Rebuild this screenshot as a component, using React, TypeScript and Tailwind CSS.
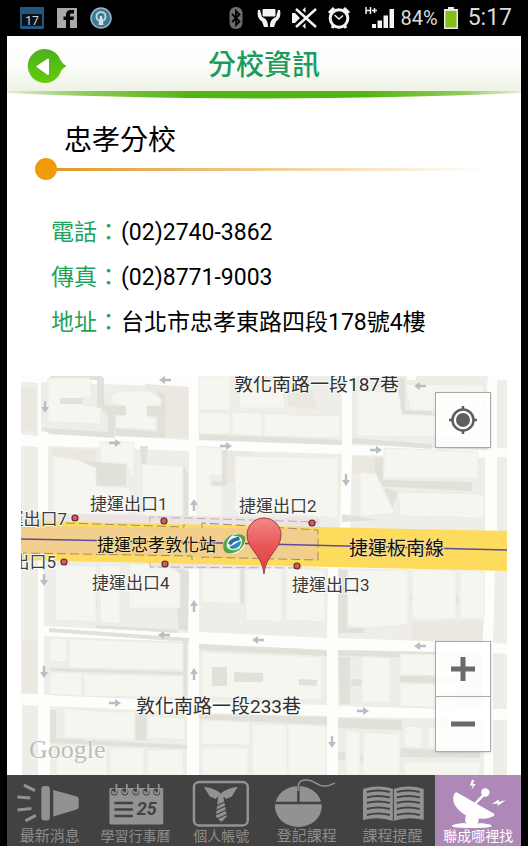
import React, { useState } from 'react';

type Tab = { id: string; label: string; size: string; icon: React.ReactNode };

const FONT = "font-[Roboto,'Noto_Sans_CJK_TC',sans-serif]";

const contacts = [
  { label: '電話', value: '(02)2740-3862' },
  { label: '傳真', value: '(02)8771-9003' },
  { label: '地址', value: '台北市忠孝東路四段178號4樓' },
];

const StatusBar: React.FC = () => (
  <div className="flex h-9 items-center justify-between pl-5 pr-4 text-[#dcdcdc]">
    <div className="flex items-center gap-[13px]">
      <svg width="24" height="22" viewBox="0 0 24 22">
        <rect width="24" height="22" rx="1" fill="#24577f" />
        <rect x="2" y="7" width="20" height="12" fill="#0d1116" />
        <text x="12" y="18" textAnchor="middle" fontSize="12" fill="#cfd4d8">17</text>
      </svg>
      <svg width="20" height="20" viewBox="0 0 20 20">
        <rect width="20" height="20" fill="#a9a9a9" />
        <path d="M9 20V12H6.500V8.500H9V7C9 4 10.500 2 14 2H17V5.500H15C13.500 5.500 13 6 13 7.200V8.500H17L16.500 12H13V20Z" fill="#050505" />
      </svg>
      <svg width="22" height="22" viewBox="0 0 22 22">
        <circle cx="11" cy="11" r="10" fill="#3c7a94" stroke="#9cbac5" strokeWidth="1.500" />
        <circle cx="11" cy="9.500" r="4.500" fill="none" stroke="#bcd3db" strokeWidth="2" />
        <path d="M10 9h2l1.500 9h-5z" fill="#d6e1e5" />
      </svg>
    </div>
    <div className="flex items-center gap-[10px]">
      <svg className="mr-1" width="14" height="22" viewBox="0 0 14 22">
        <rect x="0.500" width="13" height="22" rx="6" fill="#6d6d6d" />
        <path d="M3 7L10.500 14.500L7 18V4L10.500 7.500L3 15" fill="none" stroke="#000" strokeWidth="1.800" />
      </svg>
      <svg width="24" height="22" viewBox="0 0 24 22" fill="#f4f4f4">
        <rect x="5.500" y="2" width="13" height="7.500" rx="1" />
        <path d="M1 3C0 8 1 12 5 14.500L7 20H11C11 15 10 12 5 10L3 3Z" />
        <path d="M23 3C24 8 23 12 19 14.500L17 20H13C13 15 14 12 19 10L21 3Z" />
      </svg>
      <svg width="26" height="24" viewBox="0 0 26 24" fill="#f4f4f4">
        <path d="M1 7H4L9 12L4 17H1Z" />
        <path d="M5 3L25 21M25 3L5 21" stroke="#f4f4f4" strokeWidth="2.500" />
        <path d="M11.500 4L14.500 1V7ZM11.500 20L14.500 23V17Z" />
      </svg>
      <svg width="24" height="24" viewBox="0 0 24 24" fill="none" stroke="#f4f4f4">
        <circle cx="12" cy="12.500" r="8.800" strokeWidth="3" />
        <path d="M2 7L7 2M22 7L17 2M5 22L7 19M19 22L17 19" strokeWidth="3" />
        <path d="M7.500 9L12 13L16 9.500" strokeWidth="1.500" />
      </svg>
      <svg className="ml-1" width="30" height="24" viewBox="0 0 30 24" fill="#f4f4f4">
        <path d="M1 1V8M5.500 1V8M1 4.500H5.500M7 4.500H12M9.500 2V7" stroke="#f4f4f4" strokeWidth="1.500" />
        <path d="M7 18H11V22H7ZM12.500 14.500H17V22H12.500ZM18.500 9.500H23V22H18.500ZM24.500 3H29V22H24.500Z" />
      </svg>
      <span className="-ml-1 text-[20px]">84%</span>
      <svg className="-ml-1" width="14" height="22" viewBox="0 0 14 22">
        <path d="M4 0H10V2H14V22H0V2H4Z" fill="#e8e8e8" />
        <rect x="1.500" y="4" width="11" height="16.500" fill="#84bd17" />
      </svg>
      <span className="text-[23px]">5:17</span>
    </div>
  </div>
);

const Header: React.FC = () => (
  <header>
    <div className="grid h-[55px] grid-cols-[1fr_auto_1fr] items-center bg-linear-to-b from-white via-[#fdfdfb] to-[#edf2e4] px-5 pt-[5px]">
      <button type="button" aria-label="返回" className="w-10">
        <svg width="40" height="36" viewBox="0 0 40 36">
          <defs>
            <linearGradient id="back" x1="0" y1="0" x2="0" y2="1">
              <stop offset="0" stopColor="#4cb020" />
              <stop offset="1" stopColor="#63cc08" />
            </linearGradient>
          </defs>
          <path d="M18.500 1A17 17 0 0 1 34 13Q36 16 39.500 18Q36 20 34 23A17 17 0 1 1 18.500 1Z" fill="url(#back)" />
          <path d="M10.500 18.500L21 11.500V26Z" fill="#fff" stroke="#fff" strokeWidth="2" strokeLinejoin="round" />
        </svg>
      </button>
      <h1 className="text-[28px] leading-none font-medium text-[#1b9c5e]">分校資訊</h1>
    </div>
    <svg className="block h-2 w-full" viewBox="0 0 514 8" preserveAspectRatio="none">
      <defs>
        <linearGradient id="rule">
          <stop offset="0" stopColor="#e4eed8" />
          <stop offset="0.150" stopColor="#8fc95a" />
          <stop offset="0.350" stopColor="#54b413" />
          <stop offset="0.700" stopColor="#54b413" />
          <stop offset="0.880" stopColor="#8fc95a" />
          <stop offset="1" stopColor="#e4eed8" />
        </linearGradient>
      </defs>
      <path d="M0 0H514V2Q400 7 257 7.500Q110 7 0 2Z" fill="url(#rule)" />
    </svg>
  </header>
);

/* street map, drawn in map units */
const blocks = [
  '21,382 38,383 38,436 21,434', '41,382 189,387 189,440 41,432', '199,376 342,376 342,443 199,438',
  '352,376 407,376 407,380 487,380 487,450 352,445', '497,380 507,380 507,448 497,448', '416,376 488,376 488,382 416,381',
  '21,446 38,447 38,525 21,525', '48,446 189,451 189,525 48,522', '199,450 342,454 340,530 199,526',
  '352,455 485,458 485,532 350,530', '497,457 507,457 507,535 497,535',
  '21,560 38,560 38,694 21,694', '44,560 189,562 188,633 44,626', '199,562 328,568 327,638 199,632',
  '338,568 484,571 482,643 338,638', '495,568 507,569 507,644 493,643',
  '44,636 189,642 188,701 44,695', '199,644 327,650 327,705 199,702', '338,650 482,653 482,710 338,706', '493,653 507,654 507,709 493,709',
  '22,705 38,706 38,775 22,775', '50,706 187,712 187,775 50,775', '199,713 327,716 327,775 199,775',
  '338,717 484,719 484,775 338,775', '493,720 507,720 507,775 493,775',
];

const sand = [
  '145,384 188,387 188,438 158,436', '21,388 36,388 36,432 21,430', '52,448 96,450 96,462 52,460', '222,450 254,452 254,486 222,482',
  '288,390 312,390 318,410 288,406', '412,622 484,620 482,643 412,640', '352,456 380,458 380,476 352,474', '23,640 37,640 37,694 23,692',
];

const shades = [
  '41,428 108,432 108,412 97,410 97,376 104,378 104,404 115,410 115,438 50,434', '116,428 158,432 158,390 165,396 165,438 116,436',
  '199,434 342,440 342,445 199,440', '352,438 432,444 432,449 352,443', '398,378 405,378 405,410 432,410 432,417 400,414',
  '80,460 126,464 126,486 96,486', '140,446 148,446 146,464 184,466 188,474 188,524 183,524 183,472 142,468',
  '212,480 222,482 222,450 227,450 227,486 212,486', '375,458 383,458 383,480 472,482 472,491 375,486',
  '50,375 102,376 102,380 50,380', '49,628 189,638 189,642 49,632', '50,668 186,672 186,675 50,671', '183,640 187,640 187,701 183,701',
  '199,644 327,650 327,656 199,650', '338,650 482,653 482,659 338,656', '338,657 350,657 350,704 340,704',
  '299,679 320,679 317,686 299,685', '351,679 370,680 370,686 351,686', '400,675 435,676 435,683 400,682',
  '50,738 187,745 187,749 50,743', '135,712 146,714 146,741 135,740', '50,710 56,710 56,740 50,738',
  '199,714 327,717 327,725 199,719', '338,718 402,720 402,730 338,728', '338,752 370,755 368,762 338,760', '400,748 480,752 480,758 400,757',
  '338,570 347,570 347,628 364,628 364,633 338,633', '176,565 189,572 188,631 178,629', '410,595 419,595 419,602 410,601',
  '452,594 458,594 458,604 452,603', '88,596 97,598 97,608 88,605', '240,566 244,566 244,604 240,602', '96,625 178,630 178,633 96,628',
  '342,514 380,520 342,522', '385,488 398,492 390,514',
];

const buildings = [
  '48,378 90,378 92,398 82,398 82,404 101,408 101,424 48,422', '112,394 120,391 150,391 161,399 161,406 147,406 147,416 156,418 156,430 116,428 116,416 125,415 125,406 112,404',
  '199,376 230,376 230,410 199,410', '199,412 230,413 230,434 199,434', '232,412 262,413 262,436 232,434', '264,414 340,416 340,438 264,436',
  '238,380 282,380 285,408 240,408', '357,392 398,390 402,414 480,418 480,438 357,436', '405,384 484,385 484,412 410,410',
  '53,456 78,460 96,468 96,486 130,488 130,515 53,515', '100,442 134,442 134,482 126,464 100,462', '142,464 183,466 183,518 142,516',
  '197,446 222,448 222,475 210,476 210,486 222,486 222,520 197,518', '235,456 338,458 338,518 235,512', '384,448 478,452 478,478 384,478',
  '360,472 376,474 395,514 360,516', '398,492 484,494 484,518 400,516', '55,565 96,566 96,622 55,620', '100,565 120,566 120,624 100,622',
  '129,564 170,565 180,574 180,608 129,608', '202,566 240,567 240,604 202,602', '246,567 282,568 282,622 246,620',
  '286,568 325,570 325,622 286,620', '348,570 408,570 408,625 366,628 348,626', '412,570 456,570 456,619 412,619', '460,570 484,572 484,618 460,618',
  '50,638 67,639 67,662 50,661', '69,639 183,643 183,670 69,668', '50,672 82,673 82,696 50,694', '84,674 183,676 183,698 84,696',
  '202,652 322,657 322,700 202,697', '362,656 390,658 390,702 362,702', '400,654 456,655 456,676 400,675', '400,683 456,684 456,708 400,706',
  '64,708 110,712 135,712 135,740 64,738', '148,716 185,718 185,740 148,738', '56,746 107,746 107,775 56,775', '110,748 144,748 144,775 110,775', '147,750 183,750 183,775 147,775',
  '202,720 250,722 250,745 202,744', '202,748 248,748 248,775 202,775', '252,724 287,725 287,775 252,775', '288,724 326,726 326,775 288,775',
  '346,730 360,732 360,775 346,775', '363,732 400,734 400,775 363,775', '404,726 422,727 422,748 404,746', '428,727 450,728 450,748 428,748',
  '404,762 480,762 480,775 404,775', '452,728 480,728 480,748 452,748',
];

// shadows that fall across the buildings
const notches = [
  '60,398 82,398 82,404 60,404', '106,406 126,406 126,415 106,415', '147,406 166,406 166,416 147,416',
  '234,672 263,673 263,682 234,682', '212,667 227,667 227,686 212,686', '299,679 318,680 316,686 299,685', '98,466 126,468 126,477 98,476',
];

const exits = [
  { name: '運出口7', x: 67, y: 525, anchor: 'end', dx: 75, dy: 518 },
  { name: '捷運出口1', x: 90, y: 510, anchor: 'start', dx: 164, dy: 521 },
  { name: '捷運出口2', x: 239, y: 512, anchor: 'start', dx: 312, dy: 523 },
  { name: '出口5', x: 56, y: 568, anchor: 'end', dx: 64, dy: 562 },
  { name: '捷運出口4', x: 92, y: 589, anchor: 'start', dx: 165, dy: 564 },
  { name: '捷運出口3', x: 292, y: 591, anchor: 'start', dx: 297, dy: 566 },
] as const;

// x, y, rotation
const arrows = [
  [165, 380, 180], [45, 407, 90], [115, 443, 0], [226, 446, 0], [376, 450, 0], [420, 386, 180], [346, 480, 90],
  [194, 505, -90], [44, 580, 90], [194, 606, -90], [164, 635, 180], [258, 640, 180], [420, 646, 180], [194, 674, -90],
  [44, 672, 90], [115, 703, 0], [363, 711, 0], [332, 742, 90],
];

const StreetMap: React.FC = () => (
  <svg className="block h-full w-full" viewBox="21 376 486 399" preserveAspectRatio="xMidYMid slice" role="img" aria-label="忠孝分校地圖">
    <defs>
      <linearGradient id="pin" x1="0" y1="0" x2="0" y2="1">
        <stop offset="0" stopColor="#f48787" />
        <stop offset="0.500" stopColor="#e85757" />
        <stop offset="1" stopColor="#d63f40" />
      </linearGradient>
    </defs>
    <rect x="21" y="376" width="486" height="399" fill="#fdfdfc" />
    {blocks.map((p) => <polygon key={p} points={p} fill="#eeede8" />)}
    {sand.map((p) => <polygon key={p} points={p} fill="#ebe8e1" />)}
    {shades.map((p) => <polygon key={p} points={p} fill="#e1e1da" />)}
    {buildings.map((p) => <polygon key={p} points={p} fill="#f6f6f1" stroke="#ecece6" strokeWidth="1" />)}
    {notches.map((p) => <polygon key={p} points={p} fill="#e1e1da" />)}
    {arrows.map(([x, y, r]) => (
      <path key={`${x}-${y}`} transform={`translate(${x} ${y}) rotate(${r})`} d="M-6 -1.200H0V-4L6 0L0 4V1.200H-6Z" fill="#b7bfc4" />
    ))}

    {/* Zhongxiao East Road and the MRT line below it */}
    <polygon points="21,513 320,518 320,530 21,524" fill="#ebe4e3" />
    <polygon points="150,560 264,566 264,570 150,568" fill="#ebe4e8" />
    <polygon points="21,521 507,531 507,571 21,560" fill="#fddc5d" />
    <polygon points="21,526 318,529 318,560 21,553" fill="#f2ce8c" />
    <g fill="none" stroke="#a58d63" strokeWidth="1" strokeDasharray="9 4">
      <path d="M66 523L184 527V524M202 528V523L318 530V560L202 557V561M192 560V556L21 553" />
      <path d="M150 522V517L318 522M150 562V567L302 568" stroke="#bcb1b4" />
    </g>
    <path d="M21 539L264 544L507 550" fill="none" stroke="#5d4ba0" strokeWidth="1.500" />

    {exits.map((e) => (
      <g key={e.name}>
        <circle cx={e.dx} cy={e.dy} r="3" fill="#e0565a" stroke="#57302f" strokeWidth="1.200" />
        <text x={e.x} y={e.y} textAnchor={e.anchor} fontSize="17" fill="#3d3d3d" stroke="#fafaf7" strokeWidth="2" paintOrder="stroke">{e.name}</text>
      </g>
    ))}
    <g fill="#2f2f2f" stroke="#fafaf7" strokeWidth="2" paintOrder="stroke" fontSize="19">
      <text x="234" y="391">敦化南路一段187巷</text>
      <text x="136" y="713">敦化南路一段233巷</text>
    </g>
    <g fill="#111" stroke="#f8dd92" strokeWidth="2" paintOrder="stroke">
      <text x="97" y="551" fontSize="17">捷運忠孝敦化站</text>
      <text x="349" y="555" fontSize="19">捷運板南線</text>
    </g>

    <g transform="translate(234 544)">
      <ellipse rx="11.500" ry="9.500" fill="#f5f7ee" transform="rotate(-30)" />
      <path d="M-9 8C-14 0 -8 -8 0 -10C-6 -6 -8 -1 -7 3C-5 7 2 7 6 4C3 9 -4 11 -9 8Z" fill="#54a447" />
      <path d="M-2 -8C4 -11 9 -10 11 -7C12 -2 9 4 3 8C8 2 9 -3 7 -6C5 -8 1 -8 -2 -8Z" fill="#54a447" />
      <path d="M-6 0C-4 -5 0 -7 5 -7L6 -4L0 -2L-3 1Z" fill="#2a6ea8" />
      <path d="M7 -3C7 2 3 5 -2 5L-5 3L1 0L4 -2Z" fill="#2a8cb0" />
    </g>

    <path d="M264 574C263 556 247 549 247 535A17 17 0 0 1 281 535C281 549 265 556 264 574Z" fill="url(#pin)" stroke="#a8383a" strokeWidth="1" />

    <text x="29" y="758" fontSize="26" fill="#bdbdb8" stroke="#fff" strokeWidth="1" paintOrder="stroke" className="font-['Liberation_Serif',serif]">Google</text>
  </svg>
);

const mapButton = 'grid size-14 place-items-center border border-[#a9a9a9] bg-white/85 shadow-sm';

const tabs: Tab[] = [
  {
    id: 'news', label: '最新消息', size: 'text-[15px]',
    icon: (
      <g fill="#929292">
        <path d="M17 10L28 15.500M10.500 22L23.500 23M10.500 35L24.500 33.500M18.500 46L29 40.500" stroke="#929292" strokeWidth="3" />
        <rect x="34.500" y="11" width="8.500" height="34.500" rx="3" />
        <path d="M46.500 15L70 21.500Q72 22 72 24V32Q72 34 70 34.500L46.500 41.500Z" />
      </g>
    ),
  },
  {
    id: 'calendar', label: '學習行事曆', size: 'text-[14px]',
    icon: (
      <g>
        <rect x="16.500" y="13" width="54" height="36.500" rx="1.500" fill="#929292" />
        {[21.5, 32, 43, 53.5, 64].map((x) => (
          <g key={x} fill="none">
            <circle cx={x} cy="17" r="3.500" fill="#424242" />
            <path d={`M${x + 2} 9V16Q${x + 2} 18.500 ${x} 18.500T${x - 2} 16`} stroke="#929292" strokeWidth="1.800" />
          </g>
        ))}
        <path d="M21.500 28H40M21.500 34.500H40M21.500 41H40" stroke="#424242" strokeWidth="2.500" />
        <text x="44" y="40" fontSize="18" fontWeight="700" fontStyle="italic" fill="#424242">25</text>
      </g>
    ),
  },
  {
    id: 'account', label: '個人帳號', size: 'text-[14px]',
    icon: (
      <g fill="#929292">
        <rect x="16" y="7" width="54" height="43.500" rx="5" fill="none" stroke="#929292" strokeWidth="2.500" />
        <path d="M26 12Q35 12.500 42.500 18L38 24L32 21.500ZM60 12Q51 12.500 43.500 18L48 24L54 21.500Z" />
        <path d="M39.500 20.500L43 18L46.500 20.500L45.500 24H40.500Z" />
        <path d="M40 24H46L49 41.500L43.500 47L38 41.500Z" />
        <path d="M38 31L48 26.500M38 35.500L49 30.500M37.500 40L50 34.500M38 44.500L50 39" stroke="#424242" strokeWidth="1.200" />
      </g>
    ),
  },
  {
    id: 'register', label: '登記課程', size: 'text-[15px]',
    icon: (
      <g>
        <ellipse cx="34.500" cy="31.500" rx="23.500" ry="20.500" fill="#929292" />
        <path d="M11 28H58M34.500 28V11" stroke="#424242" strokeWidth="2.500" fill="none" />
        <path d="M34.500 16V11C34.500 4 45 3 52 8S65 11 71 8" fill="none" stroke="#929292" strokeWidth="1.500" />
      </g>
    ),
  },
  {
    id: 'reminder', label: '課程提醒', size: 'text-[15px]',
    icon: (
      <g>
        <path d="M13 14Q28 9 43.500 14Q59 9 74 14V45Q59 41 43.500 46Q28 41 13 45Z" fill="#929292" />
        <g fill="none" stroke="#424242" strokeWidth="2">
          <path d="M43.500 14V46" strokeWidth="1" />
          {[17, 22.5, 28, 34, 40].map((y) => (
            <path key={y} d={`M17 ${y}Q28 ${y - 3} 40 ${y}M47 ${y}Q58 ${y - 3} 70 ${y}`} />
          ))}
        </g>
      </g>
    ),
  },
  {
    id: 'where', label: '聯成哪裡找', size: 'text-[14px]',
    icon: (
      <g fill="#fff">
        <path d="M20 18Q21.500 16.500 23 18L59 38.500Q60.500 40 59 41C48 46.500 34 43.500 26 37C19 31 16 24 20 18Z" />
        <path d="M40 29L50.500 18" stroke="#fff" strokeWidth="2.500" />
        <circle cx="50.500" cy="17.500" r="4.200" />
        <path d="M31 39H43L44 48Q57 49 57 51Q57 53 37 53T17 51Q17 49 30 48Z" />
        <path d="M28.500 43.500L31 49M45.500 43.500L43.500 49" stroke="#ae88b6" strokeWidth="1" />
        <path d="M37 5L35 10.500H38L36.500 15L41 9H38L39.500 5ZM71 25L64 27V24.500L57 29L63 28.500V31Z" />
      </g>
    ),
  },
];

const App: React.FC = () => {
  const [active, setActive] = useState('where');

  return (
    <div className={`flex min-h-screen flex-col bg-black ${FONT}`}>
      <StatusBar />
      <div className="mx-[7px] flex flex-1 flex-col bg-white">
        <Header />

        <main className="flex flex-1 flex-col">
          <h2 className="mt-[26px] pl-[57px] text-[28px] leading-8 text-black">忠孝分校</h2>
          <div className="mt-px flex items-center pl-7">
            <span className="size-[22px] rounded-full bg-[#f09a0c]" />
            <span className="mr-8 h-[3px] flex-1 bg-linear-to-r from-[#e09a22] via-[#f0cf95] to-white" />
          </div>

          <dl className="mt-[30px] pl-11 text-[23px] leading-[45px]">
            {contacts.map((c) => (
              <div key={c.label} className="flex">
                <dt className="w-[70px] shrink-0 whitespace-nowrap text-[#22a35c]">{c.label}：</dt>
                <dd className="text-black">{c.value}</dd>
              </div>
            ))}
          </dl>

          <section className="relative mx-3.5 mt-[31px] aspect-[486/399] overflow-hidden">
            <StreetMap />
            <button type="button" aria-label="我的位置" className={`${mapButton} absolute right-4 top-4`}>
              <svg width="30" height="30" viewBox="0 0 30 30" fill="none" stroke="#5f5f5f">
                <circle cx="15" cy="15" r="10.500" strokeWidth="2.500" />
                <circle cx="15" cy="15" r="7" fill="#5f5f5f" stroke="none" />
                <path d="M15 1V5M15 25V29M1 15H5M25 15H29" strokeWidth="2.500" />
              </svg>
            </button>
            <div className="absolute bottom-[23px] right-4 flex flex-col">
              <button type="button" aria-label="放大" className={mapButton}>
                <svg width="24" height="24" viewBox="0 0 24 24"><path d="M0 12H24M12 0V24" stroke="#6a6a6a" strokeWidth="5" /></svg>
              </button>
              <button type="button" aria-label="縮小" className={`${mapButton} -mt-px`}>
                <svg width="24" height="24" viewBox="0 0 24 24"><path d="M0 12H24" stroke="#6a6a6a" strokeWidth="5" /></svg>
              </button>
            </div>
          </section>
        </main>

        <nav className="flex bg-[#424242]">
          {tabs.map((tab) => (
            <button
              key={tab.id}
              type="button"
              onClick={() => setActive(tab.id)}
              className={`flex min-w-0 flex-1 flex-col items-center pb-0.5 ${tab.size} ${active === tab.id ? 'bg-[#ae88b6] text-white' : 'text-[#8d8d8d]'}`}
            >
              <svg className="h-[54px] w-full" viewBox="0 0 86 54">{tab.icon}</svg>
              <span className="leading-[15px] whitespace-nowrap">{tab.label}</span>
            </button>
          ))}
        </nav>
      </div>
    </div>
  );
};

export default App;
